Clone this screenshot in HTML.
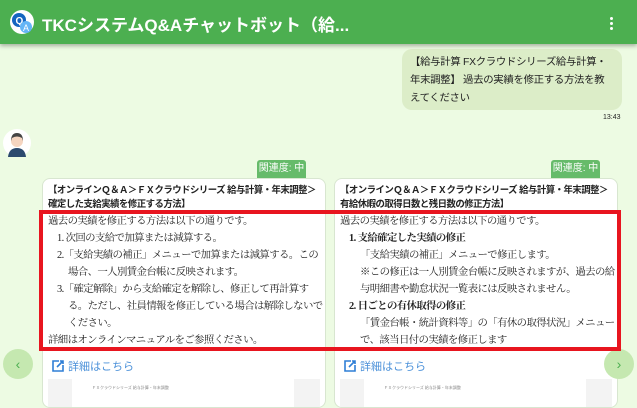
<!DOCTYPE html>
<html><head><meta charset="utf-8"><style>
*{margin:0;padding:0;box-sizing:border-box}
body{width:637px;height:400px;overflow:hidden;background:#edfbe3;font-family:"Liberation Sans","Noto Sans CJK JP",sans-serif;position:relative}
.hdr{position:absolute;left:0;top:0;width:637px;height:44px;background:#4caf50;box-shadow:0 2px 4px rgba(0,0,0,.3);z-index:5}
.logo{position:absolute;left:10px;top:10px;width:24px;height:24px;border-radius:50%;background:#fff}
.ht{position:absolute;left:42px;top:11px;color:#fff;font-size:17px;font-weight:bold;white-space:nowrap}
.dots{position:absolute;left:610px;top:17px;width:4px}
.dots i{display:block;width:3px;height:3px;background:#fff;border-radius:50%;margin-bottom:2px}
.bub{position:absolute;left:402px;top:49px;width:220px;height:61px;background:#dcedc8;border-radius:10px;padding:5px 4px 0 8px;font-size:10.4px;line-height:18px;color:#222;white-space:nowrap;letter-spacing:-0.3px;overflow:hidden}
.time{position:absolute;left:603px;top:114px;font-size:7px;color:#222}
.av{position:absolute;left:3px;top:129px;width:28px;height:28px;border-radius:50%;background:#fff}
.badge{position:absolute;top:160px;width:49px;height:18px;background:#66bb6a;color:#fff;font-size:10px;line-height:18px;text-align:center;border-radius:3px 3px 0 0}
.card{position:absolute;top:178px;width:284px;height:230px;background:#fff;border:1px solid #d8e6d0;border-radius:8px;padding:4px 5px;overflow:hidden}
.tt{font-size:9.4px;font-weight:bold;line-height:14px;color:#222;letter-spacing:-0.5px;white-space:nowrap}
.bd{font-family:"Liberation Serif","Noto Serif CJK SC",serif;font-size:10.4px;line-height:17px;color:#222;margin-top:2px;white-space:nowrap;letter-spacing:-0.6px}
.bd .i{padding-left:16px;text-indent:-11px;margin-left:4px}
.bd .p{padding-left:20px}
.lk{position:absolute;left:8px;top:179px;color:#4a90d9;font-size:11px}
.lk svg{vertical-align:-3px}
.shot{position:absolute;left:5px;top:200px;width:272px;height:40px;background:#f3f3f3}
.shot div{position:absolute;left:24px;top:0;width:222px;height:40px;background:#fff;border-bottom:1px solid #ddd}
.shot span{position:absolute;left:20px;top:6px;font-size:4px;color:#888;white-space:nowrap}
.red{position:absolute;left:39px;top:210px;width:582px;height:141px;border:4px solid #e8151f;z-index:3}
.arr{position:absolute;top:349px;width:30px;height:30px;border-radius:50%;background:#c5e8b0;color:#4caf50;font-size:14px;text-align:center;line-height:30px}
</style></head><body>
<div class="hdr">
<div class="logo"><svg width="24" height="24"><circle cx="9" cy="10" r="7" fill="#1565c0"/><text x="5.5" y="14" font-size="10" fill="#fff" font-weight="bold" font-family="Liberation Sans">Q</text><circle cx="16" cy="17" r="6" fill="#64b5f6"/><text x="13" y="21" font-size="9" fill="#fff" font-family="Liberation Sans">A</text></svg></div>
<div class="ht">TKCシステムQ&amp;Aチャットボット（給...</div>
<div class="dots"><i></i><i></i><i></i></div>
</div>
<div class="bub">【給与計算 FXクラウドシリーズ給与計算・<br>年末調整】 過去の実績を修正する方法を教<br>えてください</div>
<div class="time">13:43</div>
<div class="av"><svg width="28" height="28"><circle cx="14" cy="12" r="6" fill="#f5d5c0"/><path d="M8 12 Q8 4 14 4 Q20 4 20 12 L19 9 Q14 6 9 9Z" fill="#444"/><path d="M5 28 Q6 19 14 19 Q22 19 23 28Z" fill="#2c4a6e"/></svg></div>
<div class="badge" style="left:257px">関連度: 中</div>
<div class="badge" style="left:551px">関連度: 中</div>
<div class="card" style="left:42px">
<div class="tt">【オンラインＱ＆Ａ＞ＦＸクラウドシリーズ 給与計算・年末調整＞<br>確定した支給実績を修正する方法】</div>
<div class="bd">過去の実績を修正する方法は以下の通りです。
<div class="i">1. 次回の支給で加算または減算する。</div>
<div class="i">2.「支給実績の補正」メニューで加算または減算する。この<br>場合、一人別賃金台帳に反映されます。</div>
<div class="i">3.「確定解除」から支給確定を解除し、修正して再計算す<br>る。ただし、社員情報を修正している場合は解除しないで<br>ください。</div>
詳細はオンラインマニュアルをご参照ください。</div>
<div class="lk"><svg width="14" height="14"><path d="M8 2H2v10h10V6" fill="none" stroke="#2f7fd6" stroke-width="1.6"/><path d="M6 8L12 2M9 2h3v3" fill="none" stroke="#2f7fd6" stroke-width="1.6"/></svg> 詳細はこちら</div>
<div class="shot"><div><span>ＦＸクラウドシリーズ 給与計算・年末調整</span></div></div>
</div>
<div class="card" style="left:334px">
<div class="tt">【オンラインＱ＆Ａ＞ＦＸクラウドシリーズ 給与計算・年末調整＞<br>有給休暇の取得日数と残日数の修正方法】</div>
<div class="bd">過去の実績を修正する方法は以下の通りです。
<div class="i"><b>1. 支給確定した実績の修正</b></div>
<div class="p">「支給実績の補正」メニューで修正します。<br>※この修正は一人別賃金台帳に反映されますが、過去の給<br>与明細書や勤怠状況一覧表には反映されません。</div>
<div class="i"><b>2. 日ごとの有休取得の修正</b></div>
<div class="p">「賃金台帳・統計資料等」の「有休の取得状況」メニュー<br>で、該当日付の実績を修正します</div></div>
<div class="lk"><svg width="14" height="14"><path d="M8 2H2v10h10V6" fill="none" stroke="#2f7fd6" stroke-width="1.6"/><path d="M6 8L12 2M9 2h3v3" fill="none" stroke="#2f7fd6" stroke-width="1.6"/></svg> 詳細はこちら</div>
<div class="shot"><div><span>ＦＸクラウドシリーズ 給与計算・年末調整</span></div></div>
</div>
<div class="red"></div>
<div class="arr" style="left:3px">‹</div>
<div class="arr" style="left:604px">›</div>
</body></html>
